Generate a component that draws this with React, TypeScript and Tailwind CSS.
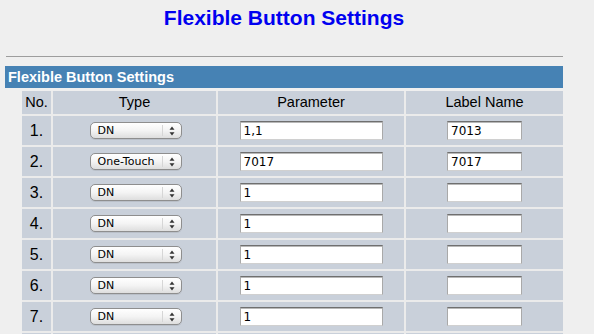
import React from 'react';

const rows = [
  { type: 'DN', param: '1,1', label: '7013' },
  { type: 'One-Touch', param: '7017', label: '7017' },
  { type: 'DN', param: '1', label: '' },
  { type: 'DN', param: '1', label: '' },
  { type: 'DN', param: '1', label: '' },
  { type: 'DN', param: '1', label: '' },
  { type: 'DN', param: '1', label: '' },
];

const SelectBox = ({ value }: { value: string }) => (
  <div className="relative flex h-[17px] w-[92px] items-center rounded-[5px] border border-[#8e8e8e] bg-gradient-to-b from-[#ffffff] via-[#f4f4f4] to-[#dedede] pl-[7px] shadow-[0_1px_0_rgba(0,0,0,0.08)]">
    <span className="font-['DejaVu_Sans',sans-serif] text-[11px] leading-none text-black">{value}</span>
    <div className="absolute top-[2px] bottom-[2px] right-[18px] w-px bg-[#d6d6d6]" />
    <svg className="absolute right-[6px] top-[3px]" width="6" height="10" viewBox="0 0 6 10">
      <path d="M3 0.5 L5.5 3.8 H0.5 Z" fill="#333" />
      <path d="M3 9.5 L5.5 6.2 H0.5 Z" fill="#333" />
    </svg>
  </div>
);

const TextInput = ({ value, width }: { value: string; width: string }) => (
  <div
    className={`${width} flex h-[19px] items-center border border-[#a9a9a9] border-t-[#6f6f6f] border-b-[#d0d0d0] bg-white pl-[3px] pt-px shadow-[inset_0_1px_0_#b8b8b8]`}
  >
    <span className="font-['DejaVu_Sans',sans-serif] text-[12px] leading-none text-black">{value}</span>
  </div>
);

const App = () => {
  return (
    <div className="h-[334px] w-[594px] overflow-hidden bg-[#efefef] font-['Liberation_Sans',Arial,sans-serif]">
      <div className="ml-[5px] w-[558px]">
        <h1 className="pt-[6px] text-center text-[21px] font-bold leading-[24px] text-[#0000f0]">
          Flexible Button Settings
        </h1>
        <div className="ml-px mt-[26px] h-px bg-[#9d9d9d]" />
        <div className="mt-[9px] h-[22px] bg-[#4682b4] pl-[3px] text-[14.5px] font-bold leading-[22px] text-white">
          Flexible Button Settings
        </div>
        <div className="ml-[17px] mt-[3px] grid grid-cols-[29px_163px_186px_157px] gap-[2px] bg-[#ebebeb] text-[14.5px] text-black">
          <div className="flex h-[23px] items-center justify-center bg-[#c9d0da]">No.</div>
          <div className="flex h-[23px] items-center justify-center bg-[#c9d0da]">Type</div>
          <div className="flex h-[23px] items-center justify-center bg-[#c9d0da]">Parameter</div>
          <div className="flex h-[23px] items-center justify-center bg-[#c9d0da]">Label Name</div>
          {rows.map((r, i) => (
            <React.Fragment key={i}>
              <div className="flex h-[29px] items-center justify-center bg-[#c9d0da] text-[16px]">{i + 1}.</div>
              <div className="flex h-[29px] items-center justify-center bg-[#c9d0da] pl-[2px]">
                <SelectBox value={r.type} />
              </div>
              <div className="flex h-[29px] items-center justify-center bg-[#c9d0da]">
                <TextInput value={r.param} width="w-[143px]" />
              </div>
              <div className="flex h-[29px] items-center justify-center bg-[#c9d0da]">
                <TextInput value={r.label} width="w-[75px]" />
              </div>
            </React.Fragment>
          ))}
          <div className="h-[29px] bg-[#c9d0da]" />
          <div className="h-[29px] bg-[#c9d0da]" />
          <div className="h-[29px] bg-[#c9d0da]" />
          <div className="h-[29px] bg-[#c9d0da]" />
        </div>
      </div>
    </div>
  );
};

export default App;
